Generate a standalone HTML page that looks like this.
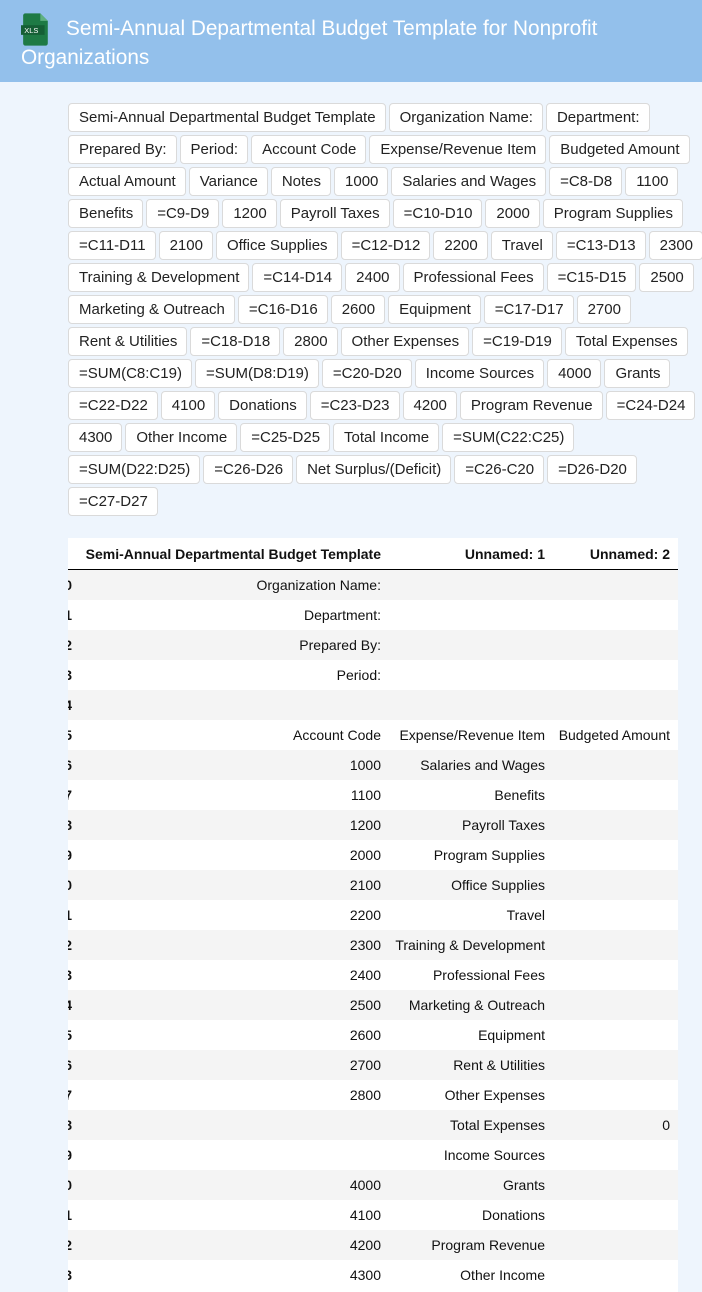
<!DOCTYPE html>
<html><head><meta charset="utf-8"><style>
*{box-sizing:border-box;margin:0;padding:0}
body{width:702px;height:1292px;overflow:hidden;background:#eef5fd;font-family:"Liberation Sans",Arial,sans-serif;position:relative}
.hdr{position:absolute;left:0;top:0;width:702px;height:82px;background:#93c0eb;color:#fff;font-size:20.8px;line-height:29px;padding:14px 10px 0 21px}
.hdr .t{display:inline-block;text-indent:45px}
.icon{position:absolute;left:21px;top:13px}
.tags{position:absolute;left:68px;top:103px;width:634px}
.row{display:flex;height:29px;margin-bottom:3px;white-space:nowrap}
.tag{height:29px;line-height:27px;border:1px solid #dadada;border-radius:4px;background:#fff;font-size:15px;color:#222;padding:0 9px 0 10px;margin-right:3px}
.tbl{position:absolute;left:68px;top:538px;width:610px;height:754px;overflow:hidden;background:#fff;font-size:14px;color:#111}
.tr{position:absolute;left:0;width:610px;height:30px;line-height:30px}
.tr.g{background:#f4f4f4}
.c{position:absolute;top:0;text-align:right;white-space:nowrap}
.i{left:-20px;width:24px;font-weight:bold}
.a{right:297px}
.b{right:133px}
.d{right:8px}
.th{height:32px;line-height:32px;font-weight:bold;border-bottom:1px solid #000;top:0}
</style></head><body>
<div class="hdr"><svg class="icon" width="30" height="33" viewBox="0 0 28 30"><path d="M4 0h14l7 7v21a2 2 0 0 1-2 2H4a2 2 0 0 1-2-2V2a2 2 0 0 1 2-2z" fill="#1e7a45"/><path d="M18 0v7h7z" fill="#5fb07f"/><rect x="0" y="11" width="22" height="9" fill="#155f35"/><text x="3" y="18.5" font-size="7" fill="#fff" font-family="Liberation Sans">XLS</text></svg><span class="t">Semi-Annual Departmental Budget Template for Nonprofit</span><br>Organizations</div>
<div class="tags">
<div class="row"><span class="tag">Semi-Annual Departmental Budget Template</span><span class="tag">Organization Name:</span><span class="tag">Department:</span></div>
<div class="row"><span class="tag">Prepared By:</span><span class="tag">Period:</span><span class="tag">Account Code</span><span class="tag">Expense/Revenue Item</span><span class="tag">Budgeted Amount</span></div>
<div class="row"><span class="tag">Actual Amount</span><span class="tag">Variance</span><span class="tag">Notes</span><span class="tag">1000</span><span class="tag">Salaries and Wages</span><span class="tag">=C8-D8</span><span class="tag">1100</span></div>
<div class="row"><span class="tag">Benefits</span><span class="tag">=C9-D9</span><span class="tag">1200</span><span class="tag">Payroll Taxes</span><span class="tag">=C10-D10</span><span class="tag">2000</span><span class="tag">Program Supplies</span></div>
<div class="row"><span class="tag">=C11-D11</span><span class="tag">2100</span><span class="tag">Office Supplies</span><span class="tag">=C12-D12</span><span class="tag">2200</span><span class="tag">Travel</span><span class="tag">=C13-D13</span><span class="tag">2300</span></div>
<div class="row"><span class="tag">Training &amp; Development</span><span class="tag">=C14-D14</span><span class="tag">2400</span><span class="tag">Professional Fees</span><span class="tag">=C15-D15</span><span class="tag">2500</span></div>
<div class="row"><span class="tag">Marketing &amp; Outreach</span><span class="tag">=C16-D16</span><span class="tag">2600</span><span class="tag">Equipment</span><span class="tag">=C17-D17</span><span class="tag">2700</span></div>
<div class="row"><span class="tag">Rent &amp; Utilities</span><span class="tag">=C18-D18</span><span class="tag">2800</span><span class="tag">Other Expenses</span><span class="tag">=C19-D19</span><span class="tag">Total Expenses</span></div>
<div class="row"><span class="tag">=SUM(C8:C19)</span><span class="tag">=SUM(D8:D19)</span><span class="tag">=C20-D20</span><span class="tag">Income Sources</span><span class="tag">4000</span><span class="tag">Grants</span></div>
<div class="row"><span class="tag">=C22-D22</span><span class="tag">4100</span><span class="tag">Donations</span><span class="tag">=C23-D23</span><span class="tag">4200</span><span class="tag">Program Revenue</span><span class="tag">=C24-D24</span></div>
<div class="row"><span class="tag">4300</span><span class="tag">Other Income</span><span class="tag">=C25-D25</span><span class="tag">Total Income</span><span class="tag">=SUM(C22:C25)</span></div>
<div class="row"><span class="tag">=SUM(D22:D25)</span><span class="tag">=C26-D26</span><span class="tag">Net Surplus/(Deficit)</span><span class="tag">=C26-C20</span><span class="tag">=D26-D20</span></div>
<div class="row"><span class="tag">=C27-D27</span></div>
</div>
<div class="tbl">
<div class="tr th"><span class="c a">Semi-Annual Departmental Budget Template</span><span class="c b">Unnamed: 1</span><span class="c d">Unnamed: 2</span></div>
<div class="tr g" style="top:32px"><span class="c i">0</span><span class="c a">Organization Name:</span></div>
<div class="tr" style="top:62px"><span class="c i">1</span><span class="c a">Department:</span></div>
<div class="tr g" style="top:92px"><span class="c i">2</span><span class="c a">Prepared By:</span></div>
<div class="tr" style="top:122px"><span class="c i">3</span><span class="c a">Period:</span></div>
<div class="tr g" style="top:152px"><span class="c i">4</span></div>
<div class="tr" style="top:182px"><span class="c i">5</span><span class="c a">Account Code</span><span class="c b">Expense/Revenue Item</span><span class="c d">Budgeted Amount</span></div>
<div class="tr g" style="top:212px"><span class="c i">6</span><span class="c a">1000</span><span class="c b">Salaries and Wages</span></div>
<div class="tr" style="top:242px"><span class="c i">7</span><span class="c a">1100</span><span class="c b">Benefits</span></div>
<div class="tr g" style="top:272px"><span class="c i">8</span><span class="c a">1200</span><span class="c b">Payroll Taxes</span></div>
<div class="tr" style="top:302px"><span class="c i">9</span><span class="c a">2000</span><span class="c b">Program Supplies</span></div>
<div class="tr g" style="top:332px"><span class="c i">10</span><span class="c a">2100</span><span class="c b">Office Supplies</span></div>
<div class="tr" style="top:362px"><span class="c i">11</span><span class="c a">2200</span><span class="c b">Travel</span></div>
<div class="tr g" style="top:392px"><span class="c i">12</span><span class="c a">2300</span><span class="c b">Training &amp; Development</span></div>
<div class="tr" style="top:422px"><span class="c i">13</span><span class="c a">2400</span><span class="c b">Professional Fees</span></div>
<div class="tr g" style="top:452px"><span class="c i">14</span><span class="c a">2500</span><span class="c b">Marketing &amp; Outreach</span></div>
<div class="tr" style="top:482px"><span class="c i">15</span><span class="c a">2600</span><span class="c b">Equipment</span></div>
<div class="tr g" style="top:512px"><span class="c i">16</span><span class="c a">2700</span><span class="c b">Rent &amp; Utilities</span></div>
<div class="tr" style="top:542px"><span class="c i">17</span><span class="c a">2800</span><span class="c b">Other Expenses</span></div>
<div class="tr g" style="top:572px"><span class="c i">18</span><span class="c b">Total Expenses</span><span class="c d">0</span></div>
<div class="tr" style="top:602px"><span class="c i">19</span><span class="c b">Income Sources</span></div>
<div class="tr g" style="top:632px"><span class="c i">20</span><span class="c a">4000</span><span class="c b">Grants</span></div>
<div class="tr" style="top:662px"><span class="c i">21</span><span class="c a">4100</span><span class="c b">Donations</span></div>
<div class="tr g" style="top:692px"><span class="c i">22</span><span class="c a">4200</span><span class="c b">Program Revenue</span></div>
<div class="tr" style="top:722px"><span class="c i">23</span><span class="c a">4300</span><span class="c b">Other Income</span></div>
</div>
</body></html>
